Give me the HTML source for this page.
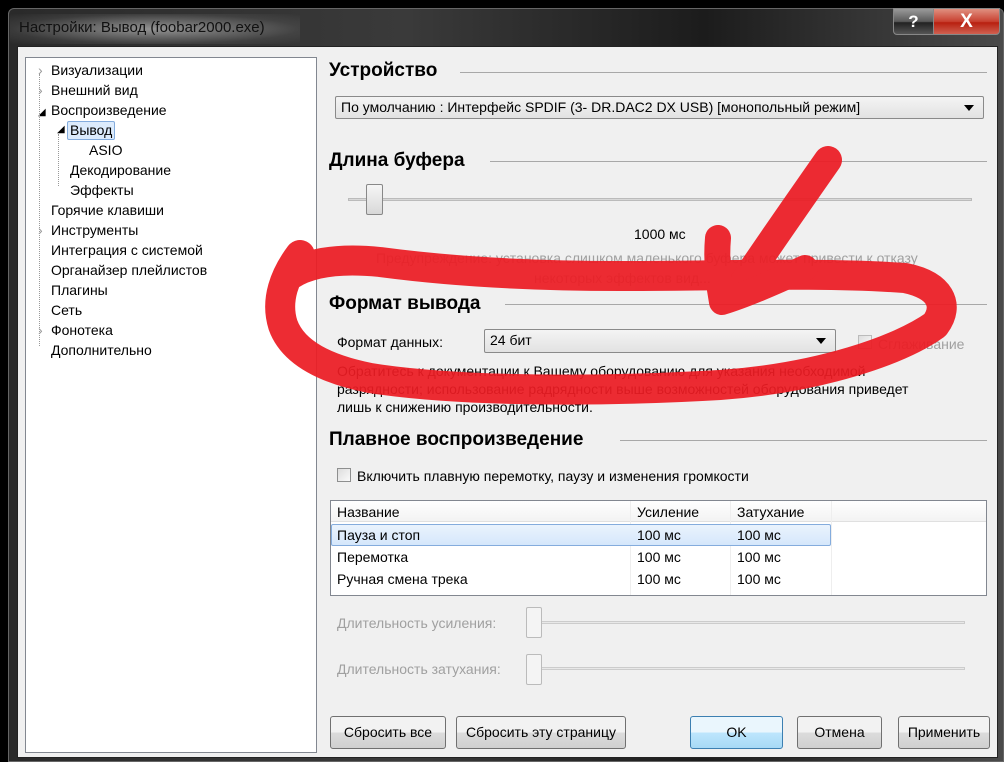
<!DOCTYPE html>
<html><head><meta charset="utf-8"><style>
*{margin:0;padding:0;box-sizing:border-box}
body{width:1004px;height:762px;background:#000;position:relative;overflow:hidden;font-family:"Liberation Sans",sans-serif;font-size:14px;color:#000}
.a{position:absolute;white-space:nowrap}
.frame{position:absolute;left:8px;top:8px;width:996px;height:754px;background:linear-gradient(90deg,#2a2a2a,#3a3a3a 40%,#1c1c1c 70%,#4a4a4a);border:1px solid #666;border-radius:6px 6px 0 0}
.client{position:absolute;left:17px;top:46px;width:981px;height:712px;background:#f0f0f0;border:1px solid #222}
.tree{position:absolute;left:25px;top:57px;width:292px;height:696px;background:#fff;border:1px solid #828790}
.h{position:absolute;font-weight:bold;font-size:19px;white-space:nowrap;line-height:22px}
.ln{position:absolute;height:1px;background:#a8a8a8}
.combo{position:absolute;border:1px solid #8a8a8a;border-radius:2px;background:linear-gradient(#f4f4f4,#e2e2e2);line-height:20px;padding-left:5px}
.combo:after{content:"";position:absolute;right:9px;top:8px;border-left:5px solid transparent;border-right:5px solid transparent;border-top:6px solid #000}
.btn{position:absolute;top:716px;height:33px;border:1px solid #707070;border-radius:3px;background:linear-gradient(#f2f2f2 50%,#dcdcdc 50%,#d0d0d0);text-align:center;line-height:31px}
.gray{color:#a0a0a0}
.cb{position:absolute;width:14px;height:14px;border:1px solid #8e8f8f;background:linear-gradient(135deg,#ddd,#fafafa)}
</style></head><body>
<div class="frame"></div>
<div class="a" style="left:10px;top:14px;width:290px;height:30px;background:radial-gradient(ellipse at center,rgba(230,230,230,.55),rgba(120,120,120,.2) 70%,transparent)"></div>
<div class="a" style="left:19px;top:19px;font-size:15px;color:#111">Настройки: Вывод (foobar2000.exe)</div>
<div class="a" style="left:893px;top:8px;width:41px;height:27px;border:1px solid #888;border-radius:0 0 0 4px;background:linear-gradient(#9a9a9a,#5a5a5a 50%,#222 55%,#555);color:#fff;font-weight:bold;font-size:17px;text-align:center;line-height:25px">?</div>
<div class="a" style="left:933px;top:8px;width:67px;height:27px;border:1px solid #888;border-radius:0 0 4px 0;background:linear-gradient(#e09080,#c84030 50%,#b82010 55%,#d06050);color:#fff;font-weight:bold;font-size:19px;text-align:center;line-height:25px">X</div>
<div class="client"></div>
<div class="tree"></div>
<div class="a" style="left:38px;top:60px;line-height:20px;color:#000">
<div style="position:relative;height:20px"><span style="color:#999">›</span><span style="position:absolute;left:13px">Визуализации</span></div>
<div style="position:relative;height:20px"><span style="color:#999">›</span><span style="position:absolute;left:13px">Внешний вид</span></div>
<div style="position:relative;height:20px"><span style="font-size:10px">◢</span><span style="position:absolute;left:13px">Воспроизведение</span></div>
<div style="position:relative;height:20px"><span style="position:absolute;left:19px;font-size:10px">◢</span><span style="position:absolute;left:29px;top:1px;height:19px;line-height:17px;padding:0 2px;background:#dcebfc;border:1px solid #84acdd;border-radius:2px">Вывод</span></div>
<div style="position:relative;height:20px"><span style="position:absolute;left:51px">ASIO</span></div>
<div style="position:relative;height:20px"><span style="position:absolute;left:32px">Декодирование</span></div>
<div style="position:relative;height:20px"><span style="position:absolute;left:32px">Эффекты</span></div>
<div style="position:relative;height:20px"><span style="position:absolute;left:13px">Горячие клавиши</span></div>
<div style="position:relative;height:20px"><span style="color:#999">›</span><span style="position:absolute;left:13px">Инструменты</span></div>
<div style="position:relative;height:20px"><span style="position:absolute;left:13px">Интеграция с системой</span></div>
<div style="position:relative;height:20px"><span style="position:absolute;left:13px">Органайзер плейлистов</span></div>
<div style="position:relative;height:20px"><span style="position:absolute;left:13px">Плагины</span></div>
<div style="position:relative;height:20px"><span style="position:absolute;left:13px">Сеть</span></div>
<div style="position:relative;height:20px"><span style="color:#999">›</span><span style="position:absolute;left:13px">Фонотека</span></div>
<div style="position:relative;height:20px"><span style="position:absolute;left:13px">Дополнительно</span></div>
</div>
<div class="a" style="left:39px;top:74px;width:0;height:272px;border-left:1px dotted #999"></div>
<div class="a" style="left:58px;top:134px;width:0;height:52px;border-left:1px dotted #999"></div>

<div class="h" style="left:329px;top:60px">Устройство</div><div class="ln" style="left:460px;top:72px;width:527px"></div>
<div class="combo" style="left:335px;top:96px;width:649px;height:23px">По умолчанию : Интерфейс SPDIF (3- DR.DAC2 DX USB) [монопольный режим]</div>
<div class="h" style="left:329px;top:150px">Длина буфера</div><div class="ln" style="left:490px;top:161px;width:497px"></div>
<div class="ln" style="left:348px;top:198px;width:624px;height:3px;background:#d8d8d8;border:1px solid #bbb"></div>
<div class="a" style="left:366px;top:184px;width:17px;height:31px;border:1px solid #888;border-radius:2px;background:linear-gradient(#f6f6f6,#d8d8d8)"></div>
<div class="a" style="left:634px;top:226px">1000 мс</div>
<div class="a gray" style="left:376px;top:250px">Предупреждение: установка слишком маленького буфера может привести к отказу</div>
<div class="a gray" style="left:534px;top:270px">некоторых эффектов вид...</div>
<div class="h" style="left:329px;top:293px">Формат вывода</div><div class="ln" style="left:505px;top:304px;width:482px"></div>
<div class="a" style="left:337px;top:334px">Формат данных:</div>
<div class="combo" style="left:484px;top:329px;width:352px;height:24px">24 бит</div>
<div class="cb" style="left:858px;top:335px;border-color:#bbb"></div>
<div class="a gray" style="left:878px;top:336px">Сглаживание</div>
<div class="a" style="left:337px;top:362px;line-height:18px">Обратитесь к документации к Вашему оборудованию для указания необходимой<br>разрядности; использование радрядности выше возможностей оборудования приведет<br>лишь к снижению производительности.</div>
<div class="h" style="left:329px;top:429px">Плавное воспроизведение</div><div class="ln" style="left:620px;top:440px;width:367px"></div>
<div class="cb" style="left:337px;top:468px"></div>
<div class="a" style="left:357px;top:468px">Включить плавную перемотку, паузу и изменения громкости</div>
<div class="a" style="left:330px;top:500px;width:657px;height:96px;background:#fff;border:1px solid #828790"></div>
<div class="a" style="left:331px;top:501px;width:655px;height:21px;background:linear-gradient(#fff,#f3f3f3);border-bottom:1px solid #e0e0e0"></div>
<div class="a" style="left:630px;top:501px;width:1px;height:94px;background:#eee"></div>
<div class="a" style="left:730px;top:501px;width:1px;height:94px;background:#eee"></div>
<div class="a" style="left:831px;top:501px;width:1px;height:94px;background:#eee"></div>
<div class="a" style="left:331px;top:524px;width:500px;height:22px;background:linear-gradient(#eaf3fd,#d5e7fb);border:1px solid #84acdd;border-radius:2px"></div>
<div class="a" style="left:337px;top:504px">Название</div><div class="a" style="left:637px;top:504px">Усиление</div><div class="a" style="left:737px;top:504px">Затухание</div>
<div class="a" style="left:337px;top:527px">Пауза и стоп</div><div class="a" style="left:637px;top:527px">100 мс</div><div class="a" style="left:737px;top:527px">100 мс</div>
<div class="a" style="left:337px;top:549px">Перемотка</div><div class="a" style="left:637px;top:549px">100 мс</div><div class="a" style="left:737px;top:549px">100 мс</div>
<div class="a" style="left:337px;top:571px">Ручная смена трека</div><div class="a" style="left:637px;top:571px">100 мс</div><div class="a" style="left:737px;top:571px">100 мс</div>
<div class="a gray" style="left:337px;top:615px">Длительность усиления:</div>
<div class="a gray" style="left:337px;top:661px">Длительность затухания:</div>
<div class="ln" style="left:541px;top:621px;width:424px;height:3px;background:#e8e8e8;border:1px solid #ccc"></div>
<div class="ln" style="left:541px;top:667px;width:424px;height:3px;background:#e8e8e8;border:1px solid #ccc"></div>
<div class="a" style="left:526px;top:607px;width:16px;height:31px;border:1px solid #bbb;border-radius:2px;background:#f4f4f4"></div>
<div class="a" style="left:526px;top:654px;width:16px;height:31px;border:1px solid #bbb;border-radius:2px;background:#f4f4f4"></div>
<div class="btn" style="left:330px;width:116px">Сбросить все</div>
<div class="btn" style="left:456px;width:170px">Сбросить эту страницу</div>
<div class="btn" style="left:690px;width:93px;border-color:#3c7fb1;background:linear-gradient(#eaf6fd 50%,#bee6fd 50%,#a7d9f5)">OK</div>
<div class="btn" style="left:797px;width:85px">Отмена</div>
<div class="btn" style="left:898px;width:92px">Применить</div>

<svg class="a" style="left:0;top:0" width="1004" height="762">
<g fill="none" stroke="#ec1c24" stroke-linecap="round" stroke-linejoin="round" opacity="0.93">
<path stroke-width="30" d="M300 255 C285 275 275 300 283 325 C292 350 320 368 370 378 C460 392 600 392 720 385 C820 378 900 350 935 325 C950 305 940 285 905 278 C820 272 720 276 620 276 C520 276 440 270 380 262 C340 258 310 262 290 275"/>
<path stroke-width="28" d="M828 160 C800 200 765 250 735 295"/>
<path stroke-width="26" d="M718 238 C716 260 718 280 722 302 C745 295 775 282 805 268"/>
</g>
</svg>
</body></html>
